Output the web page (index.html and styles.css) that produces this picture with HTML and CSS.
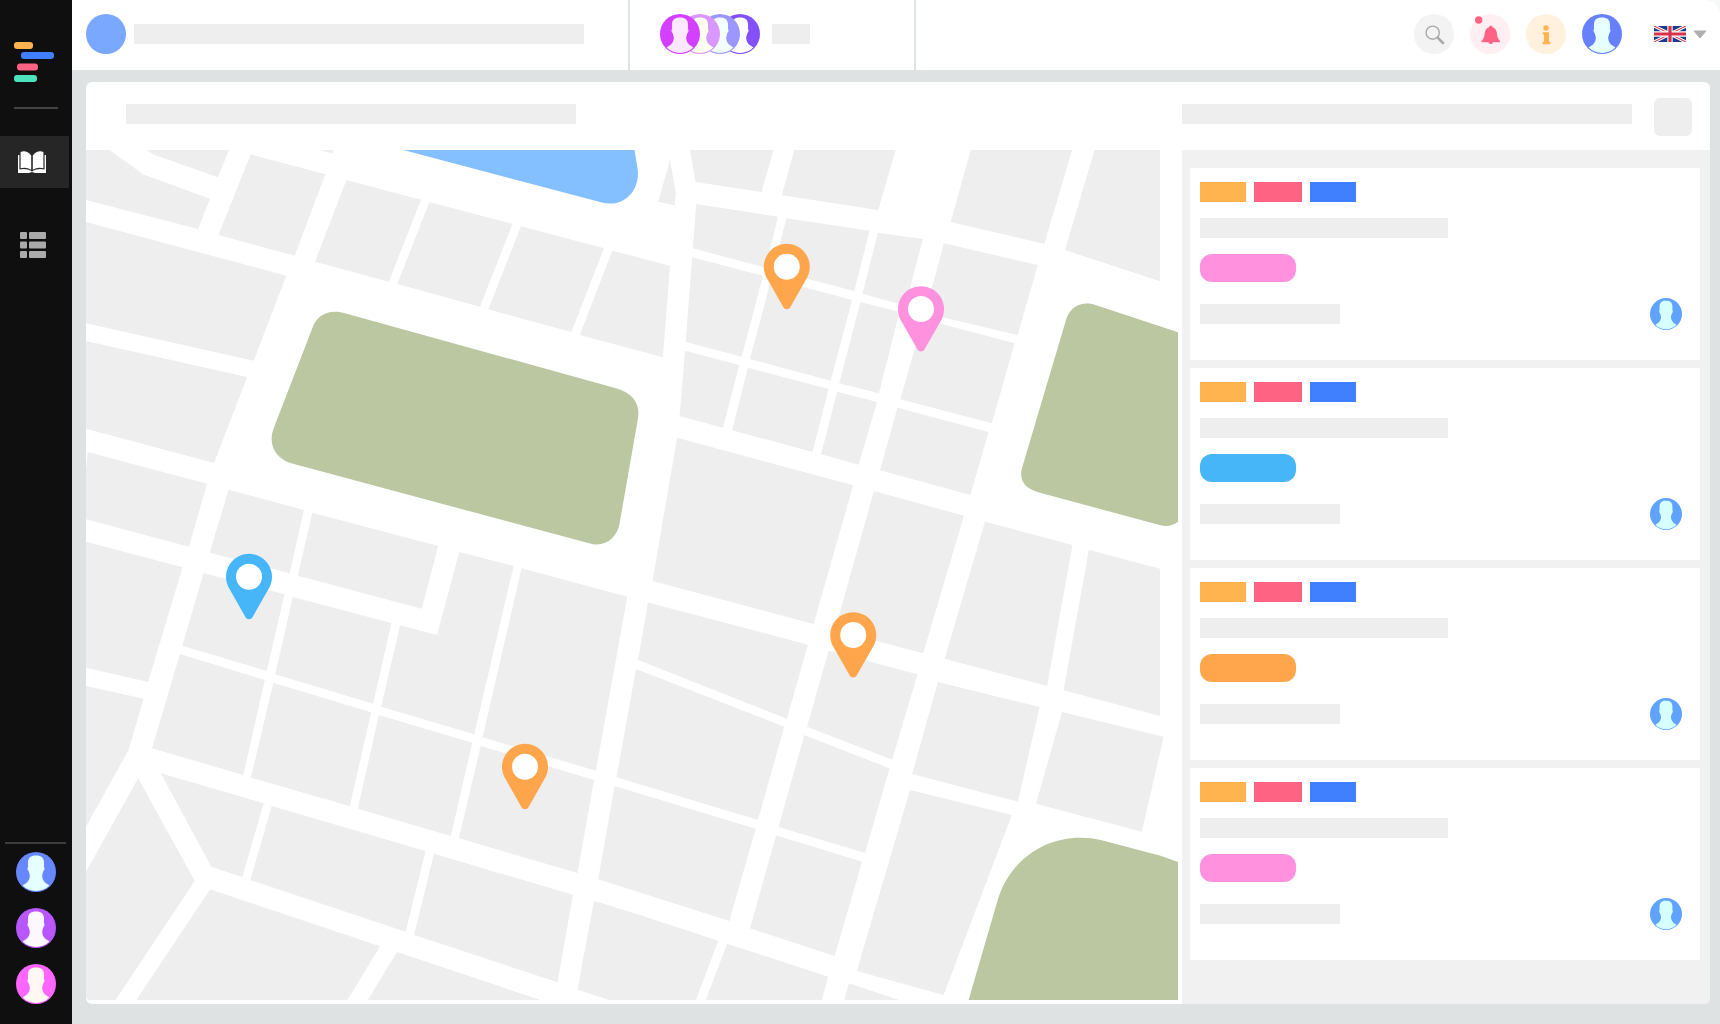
FILE: index.html
```html
<!DOCTYPE html>
<html lang="en">
<head>
<meta charset="utf-8">
<title>Map board</title>
<link rel="stylesheet" href="styles.css">
</head>
<body>
<svg class="defs" width="0" height="0" aria-hidden="true">
  <symbol id="person" viewBox="0 0 40 40">
    <circle class="p-bg" cx="20" cy="20" r="20"/>
    <path class="p-fg" d="M20 3.5C14.6 3.5 12 6 12 10.5C12 12.5 11.8 14 12.1 15C11 16 11.4 18 12.7 19.3C13.2 21.5 14 23 13.8 24.5C13.5 27 12.5 29 11 30.5L6.6 33.4A19 19 0 0 0 33.4 33.4L29 30.5C27.5 29 26.5 27 26.2 24.5C26 23 26.8 21.5 27.3 19.3C28.6 18 29 16 27.9 15C28.2 14 28 12.5 28 10.5C28 6 25.4 3.5 20 3.5Z"/>
  </symbol>
  <symbol id="pin" viewBox="-24 -24 48 68" overflow="visible">
    <path d="M-20.6 10.4A23 23 0 1 1 20.6 10.4L3.6 40.2C2 43.2 -2 43.2 -3.6 40.2Z"/>
    <circle class="pin-hole" r="13"/>
  </symbol>
</svg>

<div class="app">
  <aside class="sidebar">
    <svg class="logo" width="40" height="40" viewBox="0 0 40 40">
      <rect class="c-orange" x="0" y="0" width="19" height="7" rx="3"/>
      <rect class="c-blue" x="7" y="10" width="33" height="7" rx="3"/>
      <rect class="c-pink" x="3" y="21.5" width="21" height="7" rx="3"/>
      <rect class="c-teal" x="0" y="33" width="23" height="7" rx="3"/>
    </svg>
    <div class="side-rule"></div>
    <div class="nav-item active">
      <svg width="28" height="22" viewBox="0 0 28 22">
        <path class="white" d="M2.6 1C6 -.3 10 .2 13.2 4.6V18.8C10 16.6 6 16.2 2.6 17.2Z"/>
        <path class="white" d="M25.4 1C22 -.3 18 .2 14.8 4.6V18.8C18 16.6 22 16.2 25.4 17.2Z"/>
        <path class="white" d="M0 4H1.4V18.6C6 17.6 10 18 14 20.6C18 18 22 17.6 26.6 18.6V4H28V22H17.4L14 20.9L10.6 22H0Z"/>
      </svg>
    </div>
    <div class="nav-item plain">
      <svg width="26" height="26" viewBox="0 0 26 26">
        <rect class="grey" width="7" height="7" rx="1"/><rect class="grey" x="9" width="17" height="7" rx="1"/>
        <rect class="grey" y="9.5" width="7" height="7" rx="1"/><rect class="grey" x="9" y="9.5" width="17" height="7" rx="1"/>
        <rect class="grey" y="19" width="7" height="7" rx="1"/><rect class="grey" x="9" y="19" width="17" height="7" rx="1"/>
      </svg>
    </div>
    <div class="side-foot">
      <div class="foot-rule"></div>
      <svg class="av av40 a-blue"><use href="#person"/></svg>
      <svg class="av av40 a-violet"><use href="#person"/></svg>
      <svg class="av av40 a-magenta"><use href="#person"/></svg>
    </div>
  </aside>

  <main class="main">
    <div class="header-back">
    <header class="header">
      <div class="seg seg-title">
        <div class="dot"></div>
        <div class="ph title-bar"></div>
      </div>
      <div class="seg seg-team">
        <div class="stack">
          <svg class="av av40 a-s1"><use href="#person"/></svg>
          <svg class="av av40 a-s2"><use href="#person"/></svg>
          <svg class="av av40 a-s3"><use href="#person"/></svg>
          <svg class="av av40 a-s4"><use href="#person"/></svg>
        </div>
        <div class="ph team-bar"></div>
      </div>
      <div class="seg seg-tools">
        <svg class="tool" width="40" height="40" viewBox="0 0 40 40">
          <circle class="t-grey" cx="20" cy="20" r="20"/>
          <circle class="glass" cx="18.7" cy="18.7" r="6.6"/>
          <path class="handle" d="M23.6 23.6L29 29"/>
        </svg>
        <svg class="tool" width="40" height="40" viewBox="0 0 40 40">
          <circle class="t-pink" cx="20" cy="20" r="20"/>
          <path class="c-pink" d="M20.8 11.7C21.8 11.7 22.5 12.4 22.5 13.2C25.6 14 26.7 16.6 27 20C27.2 23 28 25 30 26.9V28.3H11.6V26.9C13.6 25 14.4 23 14.6 20C14.9 16.6 16 14 19.1 13.2C19.1 12.4 19.8 11.7 20.8 11.7Z"/>
          <circle class="c-pink" cx="20.8" cy="28.2" r="1.9"/>
          <circle class="c-pink" cx="8.7" cy="6" r="3.7"/>
        </svg>
        <svg class="tool" width="40" height="40" viewBox="0 0 40 40">
          <circle class="t-orange" cx="20" cy="20" r="20"/>
          <circle class="c-orange" cx="20" cy="14" r="2.7"/>
          <path class="c-orange" d="M16.7 18.3H23V27.8H24.2V30.2H16.7V27.8H18V20.6H16.7Z"/>
        </svg>
        <svg class="av av40 a-indigo"><use href="#person"/></svg>
        <svg class="flag" width="32" height="16" viewBox="0 0 60 30">
          <rect width="60" height="30" class="f-navy"/>
          <path class="f-white-s" d="M0 0L60 30M60 0L0 30"/>
          <path class="f-red-s" d="M0 0L60 30M60 0L0 30"/>
          <path class="f-white-w" d="M30 0V30M0 15H60"/>
          <path class="f-red-w" d="M30 0V30M0 15H60"/>
        </svg>
        <svg class="caret" width="14" height="9" viewBox="0 0 14 9">
          <path class="caret-f" d="M1 1H13L7 8Z"/>
        </svg>
      </div>
    </header>
    </div>

    <section class="board">
      <div class="board-top">
        <div class="ph board-title"></div>
        <div class="ph board-search"></div>
        <div class="board-btn"></div>
      </div>
      <div class="board-body">
        <div class="map">
          <svg class="map-svg" width="1092" height="850" viewBox="86 150 1092 850">
            <g class="blocks">
              <polygon points="86,150 109.5,150 143,174.3 210,198.7 198,229 86,200"/>
              <polygon points="147,150 229,150 218,177.3 152.7,154.3"/>
              <polygon points="250.7,154.3 325.3,174.3 294.7,255.7 218.5,235"/>
              <polygon points="319,150 333,150 332.6,153.3"/>
              <polygon points="346.4,180 421,199.7 388.8,281.7 315,261.7"/>
              <polygon points="429.4,202 512.5,224 480,306.7 397.3,284"/>
              <polygon points="520.9,226.3 604,248.3 571.4,332 488.3,309.3"/>
              <polygon points="612.3,250.7 670,265.7 662.9,357.3 579.8,335"/>
              <polygon points="86,222 286.3,275.7 253.7,360.7 86,323.3"/>
              <polygon points="86,341 247.2,377 214,463 86,428.7"/>
              <polygon points="87.7,452 207,483.7 189,546.7 86,519.3 86,470"/>
              <polygon points="228.5,489.7 303.9,510 289.7,573.3 209.7,552.7"/>
              <polygon points="312.3,512.7 438.2,546 421.8,608.7 297.8,575.7"/>
              <polygon points="459.2,552 513.6,566 474.2,734.3 381.2,706.7 400,625.3 437,635"/>
              <polygon points="521.6,568.3 627.3,596.7 595.9,770.7 482.6,737.3"/>
              <polygon points="203.6,573 284.4,594.3 266.8,671 182.2,645.7"/>
              <polygon points="292.8,597 391.5,623 373.1,703.7 275.2,674.3"/>
              <polygon points="86,541.7 182.6,567.3 148.1,682 86,667.7"/>
              <polygon points="86,686 143.5,698.7 128.6,750 86,826.7"/>
              <polygon points="179.9,654 264.8,680 243.4,775 152,748.3"/>
              <polygon points="273.3,682.7 371.2,712.3 349.8,806.3 251,777.7"/>
              <polygon points="378.9,715 472.3,742.7 450.8,836 357.8,808.7"/>
              <polygon points="480.7,746 594,780 577.5,873 458.9,838.3"/>
              <polygon points="160.8,773.3 263.7,803.3 242.3,877 211.3,866.7"/>
              <polygon points="271.7,806 425.6,851 405.7,931.7 250.3,880"/>
              <polygon points="434,853.7 572.9,894.7 557.6,982.3 414.1,935"/>
              <polygon points="138.2,778.3 194.8,881 115.6,1000 86,1000 86,871.7"/>
              <polygon points="210.1,889.3 380,946.3 347.5,1000 136.3,1000"/>
              <polygon points="396.9,952 540.4,1000 367.8,1000"/>
              <polygon points="594,900.7 640,915 718.2,940.7 696,1000 608.9,1000 577.5,989.7"/>
              <polygon points="727.1,943.7 828.2,976.7 821.8,1000 705.7,1000"/>
              <polygon points="848.9,983.3 898.9,1000 844.3,1000"/>
              <polygon points="648,602.5 807.9,644.7 786.8,718.7 638,660"/>
              <polygon points="636,669 784.3,726.7 757.9,820 616.5,777.3"/>
              <polygon points="614.6,786 755.7,828.7 729.3,921 598.2,879.3"/>
              <polygon points="776.1,835.3 862.1,861.7 834.6,956 750,928.3"/>
              <polygon points="804.3,735 889.6,768.3 865,853 778.6,827"/>
              <polygon points="828.6,650.7 917.5,674.3 892.1,759.7 807.1,726.7"/>
              <polygon points="937.9,682 1039.6,707 1017.9,801.7 912.1,774"/>
              <polygon points="910,790 1011.8,815 943.6,995 856.8,971"/>
              <polygon points="1062.1,712 1163.6,736.7 1141.8,831.7 1036,803.7"/>
              <polygon points="677.1,437.7 853.2,485.3 813.6,624 652.5,581"/>
              <polygon points="873.9,491 963.9,515.7 923.2,653.3 835,630"/>
              <polygon points="985,521.7 1072.5,545 1047.1,686 944.6,658.7"/>
              <polygon points="1088.9,549.7 1160,568.7 1160,716 1063.6,690.3"/>
              <polygon points="658.2,201.7 670,160 676,192.7 674.6,205.3"/>
              <polygon points="690,150 773.6,150 761.4,192 695.4,182"/>
              <polygon points="794.3,150 895.7,150 878.2,210 781.8,195.3"/>
              <polygon points="970.7,150 1072.1,150 1044.3,244 950.7,222"/>
              <polygon points="1094.6,150 1160,150 1160,281.3 1065,250"/>
              <polygon points="696.1,204 777.9,216.7 765.7,267.7 692.9,248.3"/>
              <polygon points="786.4,218.3 869.6,230.7 854.3,291 772.9,270"/>
              <polygon points="877.9,232.7 922.9,239 905.4,305.7 862.5,293.7"/>
              <polygon points="943.9,243.3 1037.9,265 1017.5,335 925,313.3"/>
              <polygon points="692.1,257.3 762.9,275.7 741.8,356.7 685.7,342"/>
              <polygon points="771.4,278.3 852.1,300 830.7,380.7 750,359"/>
              <polygon points="860.4,302 899.6,312 878.9,393.3 839.3,383.3"/>
              <polygon points="923,319 1014.6,343.3 991.8,423.3 900.4,399.3"/>
              <polygon points="685,350.7 739.3,365 722.9,427.7 679.6,416"/>
              <polygon points="747.9,367.7 828.6,389 812.5,452 732.1,430.3"/>
              <polygon points="837.1,391.7 877.1,402 858.6,464.7 821.1,454.3"/>
              <polygon points="897.5,407.7 988.6,432 970.4,495 880,470.3"/>
            </g>
            <path class="water" d="M403.4 150H634.5L637.5 168C641 192 622 208.5 601 202.3Z"/>
            <g class="parks">
              <path d="M344 313C328 308.5 316 316 312.3 328.3L273.3 429.3C268 446 276 458 291.2 463.3L589 543.3C605 548 617 538 619.6 523.3L638 418.3C640.5 403 632 393 617.7 388.7Z"/>
              <path d="M1095.4 305C1081 300.5 1070 307 1066 320L1022.9 465C1018 480 1024 488 1038.2 492.3L1159.6 525C1168 527.5 1173 525 1178 521.7V332.3Z"/>
              <path d="M968.6 1000L998.2 898.3C1012 855 1055 830 1100.7 840L1161.4 856L1178 862V1000Z"/>
            </g>
            <use class="pin-orange" href="#pin" x="762.8" y="242.7" width="48" height="68"/>
            <use class="pin-magenta" href="#pin" x="897" y="285" width="48" height="68"/>
            <use class="pin-sky" href="#pin" x="225" y="552.7" width="48" height="68"/>
            <use class="pin-orange" href="#pin" x="829.2" y="611" width="48" height="68"/>
            <use class="pin-orange" href="#pin" x="501" y="742.7" width="48" height="68"/>
          </svg>
        </div>
        <div class="panel">
          <article class="card">
            <div class="tags"><span class="tag t1"></span><span class="tag t2"></span><span class="tag t3"></span></div>
            <div class="ph line"></div>
            <div class="pill p-magenta"></div>
            <div class="card-foot"><div class="ph foot-bar"></div><svg class="av av32 a-card"><use href="#person"/></svg></div>
          </article>
          <article class="card">
            <div class="tags"><span class="tag t1"></span><span class="tag t2"></span><span class="tag t3"></span></div>
            <div class="ph line"></div>
            <div class="pill p-sky"></div>
            <div class="card-foot"><div class="ph foot-bar"></div><svg class="av av32 a-card"><use href="#person"/></svg></div>
          </article>
          <article class="card">
            <div class="tags"><span class="tag t1"></span><span class="tag t2"></span><span class="tag t3"></span></div>
            <div class="ph line"></div>
            <div class="pill p-orange"></div>
            <div class="card-foot"><div class="ph foot-bar"></div><svg class="av av32 a-card"><use href="#person"/></svg></div>
          </article>
          <article class="card">
            <div class="tags"><span class="tag t1"></span><span class="tag t2"></span><span class="tag t3"></span></div>
            <div class="ph line"></div>
            <div class="pill p-magenta"></div>
            <div class="card-foot"><div class="ph foot-bar"></div><svg class="av av32 a-card"><use href="#person"/></svg></div>
          </article>
        </div>
      </div>
    </section>
  </main>
</div>
</body>
</html>
```

FILE: styles.css
```css
* { box-sizing: border-box; }
html, body { margin: 0; height: 100%; }
body { background: #dee2e3; overflow: hidden; font-family: "Liberation Sans", sans-serif; }
svg { display: block; }
.defs { position: absolute; }

.app { display: flex; width: 1720px; height: 1024px; }

/* sidebar */
.sidebar { width: 72px; flex: none; background: #0f0f0f; display: flex; flex-direction: column; padding-top: 42px; }
.logo { margin-left: 14px; }
.side-rule { width: 44px; height: 2px; margin: 25px 0 0 14px; background: #444; }
.nav-item { width: 69px; height: 52px; display: flex; align-items: center; padding-left: 18px; }
.nav-item.active { margin-top: 27px; background: #262626; }
.nav-item.plain { margin-top: 31px; padding-left: 20px; }
.white { fill: #fff; }
.grey { fill: #aaa; }
.side-foot { margin-top: auto; padding-bottom: 20px; display: flex; flex-direction: column; align-items: flex-start; }
.foot-rule { width: 61px; height: 2px; margin-left: 5px; margin-bottom: 8px; background: #3d3d3d; }
.side-foot .av { margin-left: 16px; }
.side-foot .av + .av { margin-top: 16px; }

/* avatars */
.av { flex: none; }
.av40 { width: 40px; height: 40px; }
.av32 { width: 32px; height: 32px; }
.p-bg { fill: var(--bg); }
.p-fg { fill: var(--fg); }
.a-blue { --bg: #6687ff; --fg: #e6ffff; }
.a-violet { --bg: #b857ff; --fg: #fdf7ff; }
.a-magenta { --bg: #ff66ff; --fg: #fff7f2; }
.a-indigo { --bg: #6680ff; --fg: #e6ffff; }
.a-card { --bg: #5fa3ff; --fg: #d6ffff; }
.a-s1 { --bg: #d340ff; --fg: #fce9ff; z-index: 4; }
.a-s2 { --bg: #d998ff; --fg: #fffff0; z-index: 3; }
.a-s3 { --bg: #9b97ff; --fg: #f3ffff; z-index: 2; }
.a-s4 { --bg: #8450fa; --fg: #ffffff; z-index: 1; }

/* header */
.main { flex: 1; min-width: 0; display: flex; flex-direction: column; }
.header-back { background: #f6f7f7; }
.header { height: 70px; background: #fff; display: flex; border-top-right-radius: 14px; }
.seg { display: flex; align-items: center; padding-bottom: 2px; }
.seg-title { width: 558px; padding-left: 14px; gap: 8px; border-right: 2px solid #dee2e3; }
.dot { width: 40px; height: 40px; border-radius: 50%; background: #7aa7ff; }
.ph { background: #eee; }
.title-bar { width: 450px; height: 20px; }
.seg-team { width: 286px; padding-left: 30px; gap: 12px; border-right: 2px solid #dee2e3; }
.stack { display: flex; }
.stack .av + .av { margin-left: -20px; }
.team-bar { width: 38px; height: 20px; }
.seg-tools { flex: 1; justify-content: flex-end; gap: 16px; padding-right: 13px; }
.t-grey { fill: #f3f3f3; }
.t-pink { fill: #ffeef2; }
.t-orange { fill: #fff1dd; }
.glass { fill: none; stroke: #aaa; stroke-width: 1.4; }
.handle { fill: none; stroke: #aaa; stroke-width: 2.6; stroke-linecap: round; }
.c-orange { fill: #ffb44f; }
.c-blue { fill: #4080ff; }
.c-pink { fill: #ff6384; }
.c-teal { fill: #4fe3bd; }
.flag { margin-left: 16px; }
.caret { margin-left: -9px; }
.caret-f { fill: #b0b0b0; stroke: #b0b0b0; stroke-width: 1; stroke-linejoin: round; }
.f-navy { fill: #1a3a8a; }
.f-white-s { stroke: #fff; stroke-width: 6; fill: none; }
.f-red-s { stroke: #d8324a; stroke-width: 2; fill: none; }
.f-white-w { stroke: #fff; stroke-width: 10; fill: none; }
.f-red-w { stroke: #d8324a; stroke-width: 6; fill: none; }

/* board */
.board { margin: 12px 10px 20px 14px; height: 922px; background: #fff; border-radius: 6px; display: flex; flex-direction: column; overflow: hidden; }
.board-top { height: 68px; flex: none; display: flex; align-items: flex-start; padding: 22px 18px 0 40px; }
.board-title { width: 450px; height: 20px; margin-right: auto; }
.board-search { width: 450px; height: 20px; }
.board-btn { width: 38px; height: 38px; margin: -6px 0 0 22px; border-radius: 6px; background: #eee; }
.board-body { flex: 1; display: flex; gap: 4px; min-height: 0; }

.map { width: 1092px; flex: none; padding-bottom: 4px; }
.map-svg { border-bottom-left-radius: 4px; }
.blocks polygon { fill: #eee; }
.water { fill: #84bfff; }
.parks path { fill: #bac7a0; }
.pin-hole { fill: #fff; }
.pin-orange { fill: #ffa64d; }
.pin-magenta { fill: #ff91de; }
.pin-sky { fill: #46b6f8; }

/* panel */
.panel { flex: 1; background: #f1f1f1; padding: 18px 10px 0 8px; display: flex; flex-direction: column; gap: 8px; }
.card { height: 192px; flex: none; background: #fff; padding: 14px 18px 0 10px; display: flex; flex-direction: column; }
.tags { display: flex; gap: 8px; }
.tag { display: block; height: 20px; width: 46px; }
.t1 { background: #ffb44f; }
.t2 { width: 48px; background: #ff6384; }
.t3 { background: #4080ff; }
.line { width: 248px; height: 20px; margin-top: 16px; }
.pill { width: 96px; height: 28px; margin-top: 16px; border-radius: 12px; }
.p-magenta { background: #ff91de; }
.p-sky { background: #46b6f8; }
.p-orange { background: #ffa64d; }
.card-foot { margin-top: 16px; display: flex; align-items: center; justify-content: space-between; }
.foot-bar { width: 140px; height: 20px; }
```
